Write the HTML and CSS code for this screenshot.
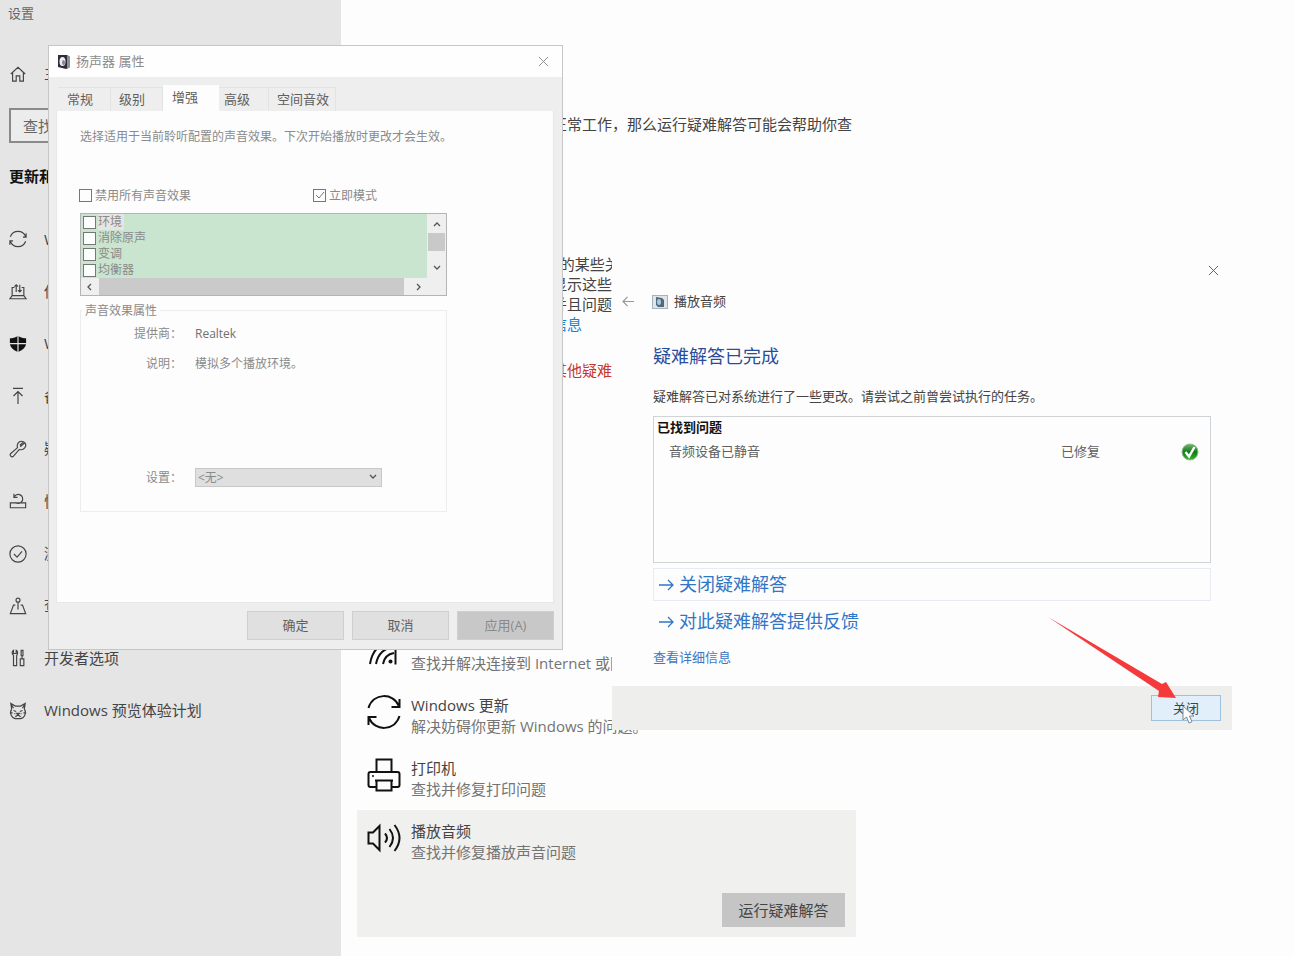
FILE: index.html
```
<!DOCTYPE html>
<html lang="zh-CN">
<head>
<meta charset="utf-8">
<title>设置</title>
<link rel="stylesheet" href="styles.css">
</head>
<body>
<div class="desktop">
  <div class="settings">
    <aside class="sidebar">
      <p class="app-name">设置</p>
      <a class="nav-item home" href="#"><svg class="nav-icon" viewBox="0 0 20 20"><path d="M2 10 10 2.500l8 7.500M4 8.500V18h4v-6h4v6h4V8.500"/></svg>主页</a>
      <input class="search" type="text" placeholder="查找设置" aria-label="查找设置">
      <h2 class="group-title">更新和安全</h2>
      <nav class="nav">
        <a class="nav-item" href="#"><svg class="nav-icon" viewBox="0 0 20 20"><path d="M1.500 7.500A9 9 0 0 1 18.500 7.500M19 3.500v4.500h-3.500M18.500 12.500A9 9 0 0 1 1.500 12.500M1 16.500v-4.500h3.500"/></svg>Windows 更新</a>
        <a class="nav-item" href="#"><svg class="nav-icon" viewBox="0 0 20 20"><path d="M6 5H3.500v9h13V5H14M3.500 14 1 17.500h18L16.500 14M8 10V2M6 4l2-2 2 2M12 2v8M10 8l2 2 2-2"/></svg>传递优化</a>
        <a class="nav-item" href="#"><svg class="nav-icon" viewBox="0 0 20 20"><path class="solid" d="M10 1C7 3 4 3.500 1 3.500V9c0 5 4 8 9 10 5-2 9-5 9-10V3.500C16 3.500 13 3 10 1z"/><path class="split" d="M10 1v18M1 9.500h18"/></svg>Windows 安全中心</a>
        <a class="nav-item" href="#"><svg class="nav-icon" viewBox="0 0 20 20"><path d="M4.500 1.500h11M10 19V5M5 10l5-5 5 5"/></svg>备份</a>
        <a class="nav-item" href="#"><svg class="nav-icon" viewBox="0 0 20 20"><path d="m13 7 4.500-4c3 4-1 9-6 7.500L5 18c-2 2-5-1-3-3l7.500-6.500C8 4 12 0 16 2l-3.500 3.500z"/></svg>疑难解答</a>
        <a class="nav-item" href="#"><svg class="nav-icon" viewBox="0 0 20 20"><path d="M5 12H1.500v5.500h17V12H15M5 12h10M5.500 2v4h4M5.500 6a5 5 0 1 1 1.500 5.500"/></svg>恢复</a>
        <a class="nav-item" href="#"><svg class="nav-icon" viewBox="0 0 20 20"><circle cx="10" cy="10" r="9"/><path d="m5.500 10 3.500 3.500L14.500 7"/></svg>激活</a>
        <a class="nav-item" href="#"><svg class="nav-icon" viewBox="0 0 20 20"><circle cx="10" cy="3.500" r="2.200"/><path d="M10 6v8M7 9H5L1.500 18.500h17L15 9h-2"/></svg>查找我的设备</a>
        <a class="nav-item" href="#"><svg class="nav-icon" viewBox="0 0 20 20"><path d="M5 1.500v3.500h3V1.500c2 1 2 4 .5 5.500v11.500H5V7C3 5.500 3 2.500 5 1.500zM13.500 1.500h2v6h-2zM14.500 7.500V11M12.500 11h4v7.500h-4z"/></svg>开发者选项</a>
        <a class="nav-item" href="#"><svg class="nav-icon" viewBox="0 0 20 20"><path d="M3 8 2 1.500 7 4.500h6l5-3L17 8M3 8c-3 4 0 10 4 10.500h6C17 18 20 12 17 8M2 1.500 5 7M18 1.500 15 7M5 9.500l3 1M15 9.500l-3 1M6 13h1M13 13h1M8.500 12.500h3L10 14.500zM7 16.500l3-2 3 2M1 12h3M16 12h3"/></svg>Windows 预览体验计划</a>
      </nav>
    </aside>

    <main class="content">
      <p class="intro">如果你的设备上某些功能无法正常工作，那么运行疑难解答可能会帮助你查找并解决问题。</p>
      <p class="about">Windows 将自动修复你设备上的某些关键问题<br>例如声音网络和更新你可选择显示这些更改<br>推荐的疑难解答程序将会运行并且问题会解决<br><a href="#">请访问隐私声明页面了解更多信息</a></p>
      <p class="alert">若问题仍存在请尝试运行下方其他疑难解答</p>
      <ul class="tools">
        <li class="tool">
          <svg class="tool-icon" viewBox="0 0 34 34"><path d="M3 32C5 20 12 11 25 9M9 32c2-10 8-16 18-17M16 32c1-6 5-10 11-11M28.500 9v23.500"/><circle class="solid" cx="23.500" cy="29.500" r="2"/></svg>
          <div><h3>Internet 连接</h3><p>查找并解决连接到 Internet 或网站的问题。</p></div>
        </li>
        <li class="tool">
          <svg class="tool-icon" viewBox="0 0 34 34"><path d="M1.500 13C6-2 26-3 32 11M32.500 4v8h-8M32.500 21C28 36 8 37 2 23M1.500 30v-8h8"/></svg>
          <div><h3>Windows 更新</h3><p>解决妨碍你更新 Windows 的问题。</p></div>
        </li>
        <li class="tool">
          <svg class="tool-icon" viewBox="0 0 34 34"><path d="M9.500 14V1.500h15V14M9.500 29h-6q-2 0-2-2V16q0-2 2-2h27q2 0 2 2v11q0 2-2 2h-6M9.500 22.500h15v10h-15zM8 22.500h18"/><circle class="solid" cx="6" cy="18" r="1"/></svg>
          <div><h3>打印机</h3><p>查找并修复打印问题</p></div>
        </li>
        <li class="tool selected">
          <svg class="tool-icon" viewBox="0 0 34 34"><path d="M1.500 11.500H6L12.500 5v24L6 22.500H1.500zM18 12.500q4 4.500 0 9M22.500 8q7 9 0 18M27.500 4q10 13 0 26"/></svg>
          <div><h3>播放音频</h3><p>查找并修复播放声音问题</p></div>
          <button class="run" type="button">运行疑难解答</button>
        </li>
      </ul>
    </main>
  </div>

  <section class="window troubleshooter" aria-label="播放音频">
    <button class="close" type="button" aria-label="关闭窗口"><svg viewBox="0 0 12 12"><path d="m1 1 10 10M11 1 1 11"/></svg></button>
    <header class="wizard-head">
      <button class="back" type="button" aria-label="返回"><svg viewBox="0 0 14 12"><path d="M13 6H1M6 1 1 6l5 5"/></svg></button>
      <svg class="wizard-icon" viewBox="0 0 16 14"><rect x=".5" y=".5" width="15" height="13" fill="#dfe5eb" stroke="#a9b2bb"/><path d="m4 2 6 1 2 2v7H6l-2-2z" fill="#536879"/><ellipse cx="7" cy="7" rx="2" ry="3" fill="#a9c9df"/></svg>
      <span>播放音频</span>
    </header>
    <div class="wizard-body">
      <h1>疑难解答已完成</h1>
      <p>疑难解答已对系统进行了一些更改。请尝试之前曾尝试执行的任务。</p>
      <div class="results">
        <h2>已找到问题</h2>
        <div class="result"><span>音频设备已静音</span><span>已修复</span>
          <svg class="ok" viewBox="0 0 18 18"><defs><linearGradient id="green" x1="0" y1="0" x2="0" y2="1"><stop offset="0" stop-color="#78b573"/><stop offset=".5" stop-color="#0c7d12"/><stop offset="1" stop-color="#39b52e"/></linearGradient></defs><circle cx="9" cy="9" r="8" fill="url(#green)" stroke="#8dbb8a"/><path d="m4.500 9 3.500 4.500L13.500 4" fill="none" stroke="#fff" stroke-width="2.400"/></svg>
        </div>
      </div>
      <a class="command framed" href="#"><svg viewBox="0 0 15 12"><path d="M0 6h14M9 1l5 5-5 5"/></svg>关闭疑难解答</a>
      <a class="command" href="#"><svg viewBox="0 0 15 12"><path d="M0 6h14M9 1l5 5-5 5"/></svg>对此疑难解答提供反馈</a>
      <a class="details" href="#">查看详细信息</a>
    </div>
    <footer class="wizard-foot"><button type="button">关闭</button></footer>
  </section>

  <section class="window properties" aria-label="扬声器 属性">
    <header class="title-bar">
      <svg class="speaker" viewBox="0 0 14 15"><path d="M1 1h9l3 2v10l-4 2-8-2z" fill="#2c2d36"/><path d="M10 1l3 2v10l-3 2z" fill="#8d8e98"/><ellipse cx="5.500" cy="7.500" rx="3" ry="4.500" fill="#ececf2"/><ellipse cx="6.500" cy="8.500" rx="1.500" ry="2.500" fill="#85868d"/></svg>
      <span>扬声器 属性</span>
      <button class="close" type="button" aria-label="关闭"><svg viewBox="0 0 12 12"><path d="m1 1 10 10M11 1 1 11"/></svg></button>
    </header>
    <div class="tabs" role="tablist">
      <button type="button" role="tab">常规</button><button type="button" role="tab">级别</button><button class="active" type="button" role="tab" aria-selected="true">增强</button><button type="button" role="tab">高级</button><button type="button" role="tab">空间音效</button>
    </div>
    <div class="panel">
      <p class="hint">选择适用于当前聆听配置的声音效果。下次开始播放时更改才会生效。</p>
      <div class="switches">
        <label><input type="checkbox">禁用所有声音效果</label>
        <label><input type="checkbox" checked>立即模式</label>
      </div>
      <div class="listbox">
        <div class="effects">
          <label><input type="checkbox"><span class="current">环境</span></label>
          <label><input type="checkbox"><span>消除原声</span></label>
          <label><input type="checkbox"><span>变调</span></label>
          <label><input type="checkbox"><span>均衡器</span></label>
        </div>
        <div class="vbar"><svg viewBox="0 0 8 8"><path d="m1 6 3-3 3 3"/></svg><i></i><svg viewBox="0 0 8 8"><path d="m1 2 3 3 3-3"/></svg></div>
        <div class="hbar"><svg viewBox="0 0 8 8"><path d="M5 1 2 4l3 3"/></svg><i></i><svg viewBox="0 0 8 8"><path d="m3 1 3 3-3 3"/></svg></div>
      </div>
      <fieldset class="details-box">
        <legend>声音效果属性</legend>
        <span class="key">提供商：</span><span class="vendor">Realtek</span>
        <span class="key">说明：</span><span>模拟多个播放环境。</span>
        <label class="key" for="preset">设置：</label>
        <span class="picker"><select id="preset"><option>&lt;无&gt;</option></select><svg viewBox="0 0 8 8"><path d="m1 2 3 3 3-3"/></svg></span>
      </fieldset>
    </div>
    <footer class="actions"><button type="button">确定</button><button type="button">取消</button><button type="button" disabled>应用(A)</button></footer>
  </section>

  <svg class="pointer-arrow" viewBox="0 0 128 82" aria-hidden="true"><path d="M0 0 114 67l4-2 10 16-18-1 1-6z"/></svg>
  <svg class="cursor" viewBox="0 0 13 19" aria-hidden="true"><path d="M1 1v14l3.500-3 2.500 6 3-1.200L7.500 11H12z"/></svg>
</div>
</body>
</html>
```
FILE: styles.css
```
* { box-sizing: border-box; }
body {
  margin: 0;
  background: #fdfdfd;
  color: #444;
  font: 15px/21px "Open Sans", "Noto Sans CJK SC", sans-serif;
}
h1, h2, h3, p, ul { margin: 0; padding: 0; font-weight: 400; font-size: inherit; }
a { color: inherit; text-decoration: none; }
button, input, select { font: inherit; color: inherit; }
button { padding: 0; border: 0; background: none; }
svg { display: block; flex: none; fill: none; }

.desktop { position: relative; min-height: 100vh; overflow: hidden; }
.settings { display: flex; min-height: 100vh; }

/* Settings: navigation */
.sidebar { flex: none; width: 341px; padding: 3px 9px; background: #e5e5e5; }
.app-name { margin-left: -1px; color: #666; font-size: 13px; }
.nav-item { display: flex; align-items: center; gap: 17px; white-space: nowrap; }
.home { margin-top: 39px; }
.nav-icon { width: 18px; height: 18px; stroke: #444; stroke-width: 1.3; }
.nav-icon .solid { fill: #111; stroke: none; }
.nav-icon .split { stroke: #e5e5e5; }
.search {
  width: 100%;
  height: 35px;
  margin-top: 24px;
  padding: 0 12px;
  border: 2px solid #8a8a8a;
  background: #ececec;
}
.search::placeholder { color: #666; opacity: 1; }
.group-title { margin-top: 23px; color: #111; font-weight: 700; }
.nav { display: grid; height: 524px; margin-top: 26px; }

/* Settings: content */
.content { flex: 1; min-width: 0; padding: 114px 16px 18px; }
.content > * { max-width: 499px; }
.about { margin-top: 98px; line-height: 20px; white-space: nowrap; }
.about a { color: #1683d8; }
.alert { margin-top: 26px; color: #c8372d; white-space: nowrap; }
.tools { margin-top: 240px; list-style: none; }
.tool {
  display: grid;
  grid-template-columns: 34px 1fr;
  gap: 0 10px;
  min-height: 63px;
  padding: 11px 11px 10px 10px;
  white-space: nowrap;
}
.tool p { color: #747474; }
.tool-icon { width: 34px; height: 34px; stroke: #111; stroke-width: 2; }
.tool-icon .solid { fill: #111; stroke: none; }
.selected { background: #f0f0ef; }
.run {
  grid-column: 2;
  justify-self: end;
  width: 123px;
  height: 34px;
  margin-top: 30px;
  background: #c5c5c5;
}

/* Windows */
.window { position: absolute; display: flex; flex-direction: column; font-size: 13px; }
.close svg { width: 11px; height: 11px; stroke: #888; }

.troubleshooter { left: 612px; top: 252px; width: 620px; background: #fdfdfd; }
.troubleshooter > .close { align-self: flex-end; margin: 13px 13px 0 0; }
.troubleshooter > .close svg { stroke: #555; }
.wizard-head { display: flex; align-items: center; height: 21px; margin: 15px 10px 0; }
.back svg { width: 13px; height: 11px; stroke: #999; stroke-width: 1.3; }
.wizard-icon { width: 16px; height: 14px; margin: 0 6px 0 17px; }
.wizard-body { display: flex; flex-direction: column; padding: 31px 21px 18px 41px; }
.wizard-body h1 { color: #294c9c; font-size: 18px; line-height: 26px; }
.wizard-body p { margin: 17px 0 9px; }
.results { height: 147px; padding: 0 3px; border: 1px solid #d0d4d7; }
.results h2 { color: #111; font-weight: 700; }
.result { display: grid; grid-template-columns: 1fr 120px 18px; align-items: center; margin: 3px 8px 0 12px; color: #606060; }
.ok { width: 18px; height: 18px; }
.command {
  display: flex;
  align-items: center;
  gap: 5px;
  height: 33px;
  margin-top: 4px;
  padding-left: 5px;
  border: 1px solid transparent;
  color: #2f76c6;
  font-size: 18px;
}
.framed { margin-top: 5px; border-color: #e8ebf5; }
.command svg { width: 15px; height: 12px; stroke: #2f76c6; stroke-width: 1.3; }
.details { margin-top: 9px; color: #3f77c4; }
.wizard-foot { display: flex; justify-content: flex-end; padding: 9px 11px; background: #eeeeed; }
.wizard-foot button { width: 70px; height: 26px; border: 1px solid #9fc1e0; background: #e1effb; }

.properties { left: 48px; top: 45px; width: 515px; border: 1px solid #c6c6c6; background: #eeeeee; }
.title-bar { display: flex; align-items: center; gap: 5px; height: 31px; padding: 0 13px 0 8px; background: #fefefe; color: #8c8c8c; }
.title-bar .close { margin-left: auto; }
.speaker { width: 14px; height: 15px; }
.tabs { display: flex; align-items: flex-end; height: 34px; padding-left: 9px; }
.tabs button { height: 24px; padding: 0 12px; border: 1px solid #e3e3e3; border-width: 1px 1px 0 0; color: #606060; }
.tabs button:first-child { padding: 0 17px 0 9px; }
.tabs button:nth-child(2) { padding: 0 17px 0 8px; }
.tabs button:nth-child(4) { padding: 0 18px 0 5px; }
.tabs button:nth-child(5) { padding: 0 6px 0 8px; }
.tabs .active { height: 26px; padding: 0 20px 2px 9px; border-color: #fdfdfd; background: #fdfdfd; }
.panel { margin: 0 8px 0 7px; padding: 15px 106px 90px 23px; border: 1px solid #e7e7e7; border-top: 0; background: #fdfdfd; color: #8a8a8a; font-size: 12px; }
.hint { white-space: nowrap; }
.switches { display: grid; grid-template-columns: 234px 1fr; margin: 38px 0 0 -1px; }
.panel label { display: flex; align-items: center; gap: 3px; }
.panel input {
  appearance: none;
  flex: none;
  width: 13px;
  height: 13px;
  margin: 0;
  border: 1px solid #777;
  background: #fdfdfd;
}
.panel input:checked { background: #fdfdfd url("data:image/svg+xml,%3Csvg xmlns='http://www.w3.org/2000/svg' viewBox='0 0 11 11'%3E%3Cpath d='M2 5l3 3 5-6' fill='none' stroke='%23777'/%3E%3C/svg%3E"); }
.listbox { display: grid; grid-template: 64px 17px / 1fr 19px; margin-top: 7px; border: 1px solid #b4b4b4; background: #efefef; }
.effects { padding-left: 2px; background: #c9e4cf; }
.effects label { height: 16px; gap: 2px; line-height: 16px; }
.effects .current { padding-right: 2px; background: #e5e5e5; }
.vbar { display: flex; flex-direction: column; align-items: center; }
.listbox svg, .picker svg { width: 8px; height: 8px; stroke: #555; stroke-width: 1.3; }
.vbar svg { margin: 6px 0 5px; }
.vbar i { width: 17px; height: 18px; background: #c9c9c9; }
.vbar svg:last-child { margin-top: 13px; }
.hbar { grid-column: 1 / -1; display: flex; align-items: center; }
.hbar svg { margin: 0 5px; }
.hbar i { width: 305px; height: 17px; background: #cacaca; }
.hbar svg:last-child { margin-left: 10px; }
.details-box {
  display: grid;
  grid-template-columns: 101px 187px;
  grid-template-rows: 30px 114px 21px;
  gap: 0 13px;
  margin: 4px 0 0;
  padding: 2px 0 23px;
  border: 1px solid #ededed;
}
.details-box legend { margin-left: 1px; padding: 0 3px; }
.details-box .key { justify-content: flex-end; align-self: start; text-align: right; }
.vendor { color: #707070; }
.picker { position: relative; }
.picker select { appearance: none; width: 100%; height: 19px; padding: 0 2px; border: 1px solid #c8c8c8; border-radius: 0; background: #dfdfdf; line-height: 17px; }
.picker svg { position: absolute; right: 5px; top: 6px; }
.actions { display: flex; justify-content: flex-end; gap: 8px; padding: 8px 8px 9px; }
.actions button { width: 97px; height: 29px; border: 1px solid #cfcfcf; background: #e0e0e0; color: #606060; }
.actions button:disabled { background: #c8c8c8; color: #8a8a8a; }

/* Marks over the windows */
.pointer-arrow { position: absolute; left: 1048px; top: 617px; width: 128px; height: 82px; fill: #f53a3c; }
.cursor { position: absolute; left: 1182px; top: 705px; width: 13px; height: 19px; fill: #fdfdfd; stroke: #808890; }
```
